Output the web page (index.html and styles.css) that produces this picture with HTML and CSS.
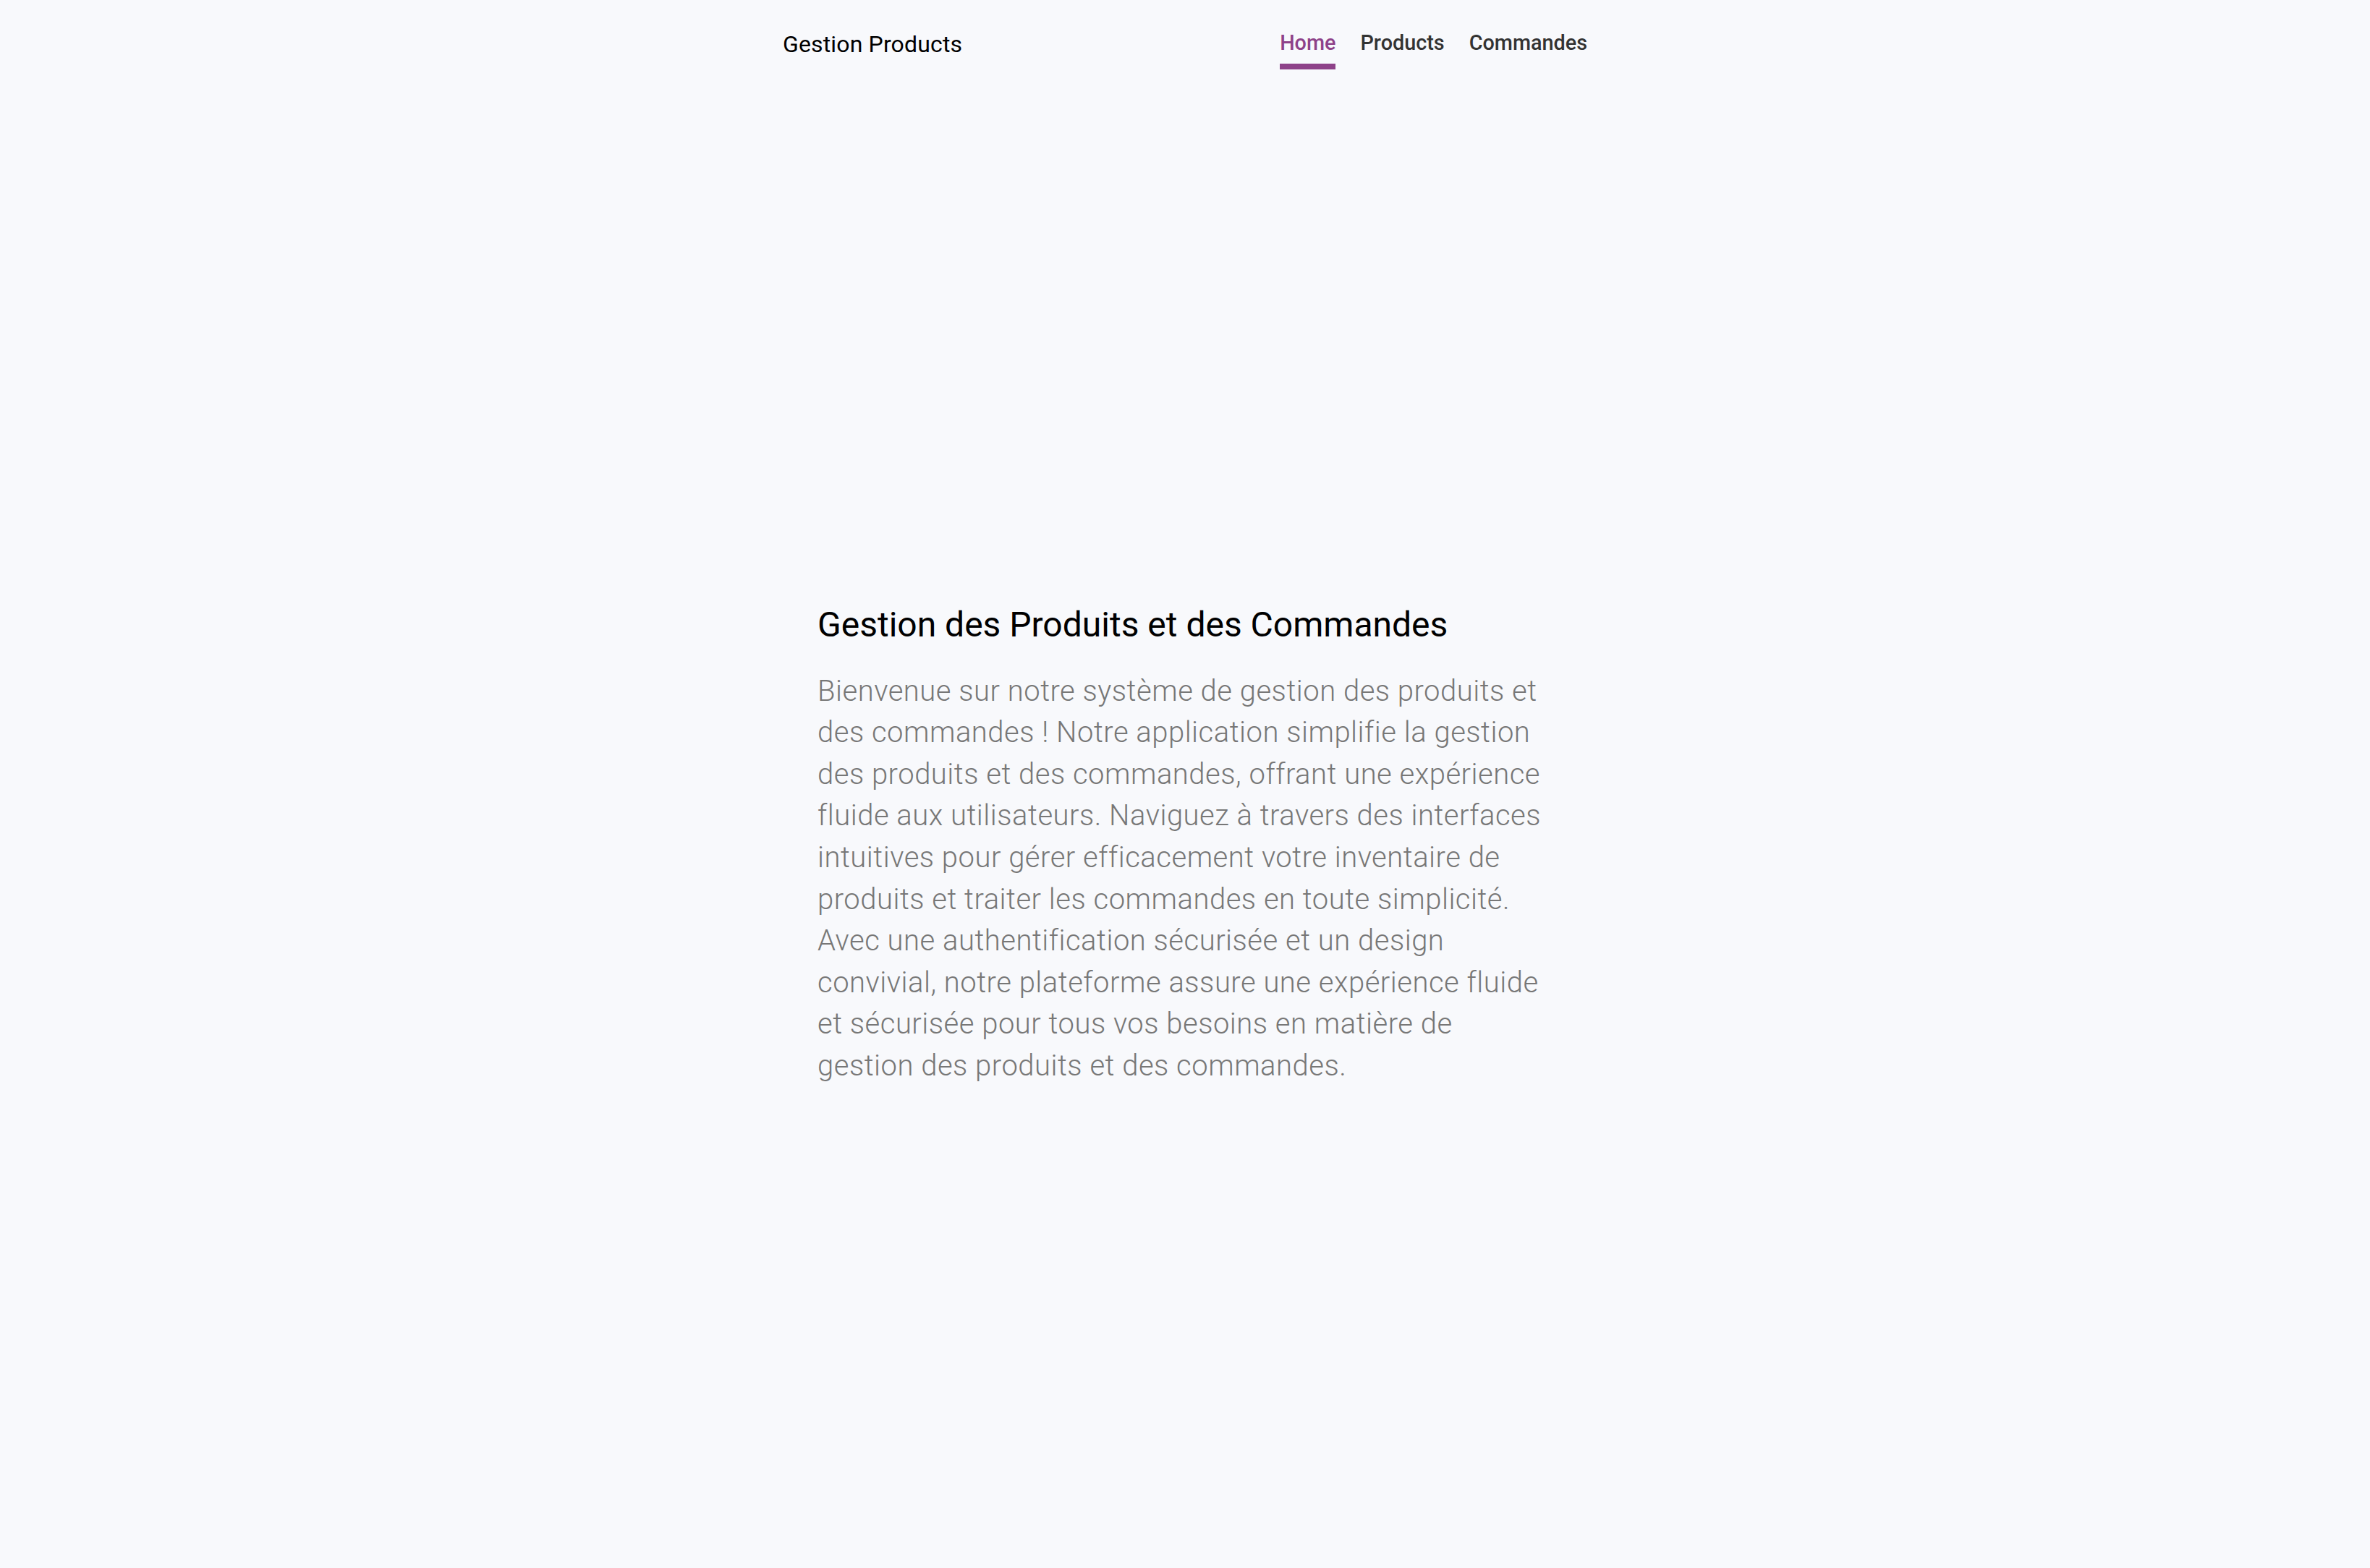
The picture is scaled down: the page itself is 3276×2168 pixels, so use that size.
FILE: index.html
```html
<!DOCTYPE html>
<html lang="fr">
<head>
<meta charset="utf-8">
<title>Gestion Products</title>
<link rel="stylesheet" href="styles.css">
</head>
<body>
<header class="topbar">
  <div class="brand">Gestion Products</div>
  <nav class="nav">
    <a class="nav-link active" href="#">Home</a>
    <a class="nav-link" href="#">Products</a>
    <a class="nav-link" href="#">Commandes</a>
  </nav>
</header>
<main class="main">
  <section class="intro">
    <h1 class="title">Gestion des Produits et des Commandes</h1>
    <p class="text">Bienvenue sur notre système de gestion des produits et des commandes ! Notre application simplifie la gestion des produits et des commandes, offrant une expérience fluide aux utilisateurs. Naviguez à travers des interfaces intuitives pour gérer efficacement votre inventaire de produits et traiter les commandes en toute simplicité. Avec une authentification sécurisée et un design convivial, notre plateforme assure une expérience fluide et sécurisée pour tous vos besoins en matière de gestion des produits et des commandes.</p>
  </section>
</main>
</body>
</html>
```

FILE: styles.css
```css
* { box-sizing: border-box; }
html, body { margin: 0; padding: 0; }
body {
  background: #f8f9fc;
  font-family: Roboto, "Liberation Sans", sans-serif;
  min-height: 2168px;
}
.topbar {
  width: 1112px;
  margin: 0 auto;
  padding-top: 42px;
  display: flex;
  justify-content: space-between;
  align-items: flex-start;
}
.brand {
  font-size: 32px;
  line-height: 1.2;
  color: #000;
  letter-spacing: 0.15px;
}
.nav {
  display: flex;
  gap: 34px;
}
.nav-link {
  font-size: 28.8px;
  line-height: 1.2;
  font-weight: 500;
  color: #333;
  text-decoration: none;
  padding-bottom: 11.4px;
  border-bottom: 8px solid transparent;
}
.nav-link.active {
  color: #8e4289;
  border-bottom-color: #8e4289;
}
.main {
  padding-top: 739px;
  display: flex;
  justify-content: center;
}
.intro {
  width: 1016px;
}
.title {
  margin: 0 0 34px;
  font-size: 48px;
  line-height: 1.2;
  font-weight: 400;
  color: #000;
}
.text {
  margin: 0;
  font-size: 40px;
  line-height: 1.44;
  font-weight: 300;
  letter-spacing: 0.5px;
  color: #777;
}
```
